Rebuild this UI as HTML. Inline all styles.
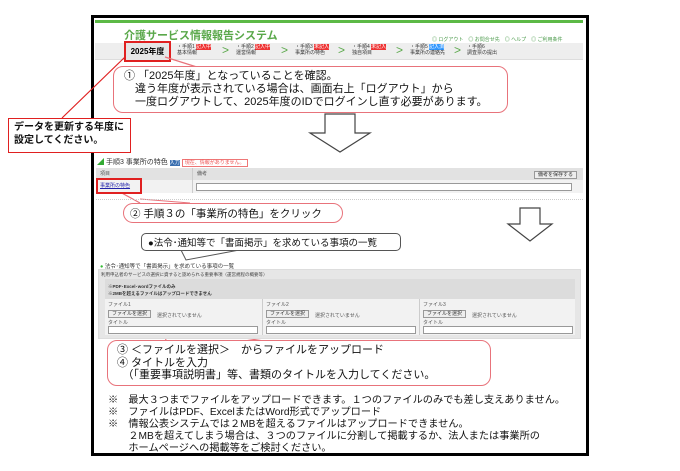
<!DOCTYPE html>
<html><head><meta charset="utf-8"><style>
body{margin:0;width:680px;height:471px;background:#fff;position:relative;overflow:hidden;font-family:"Liberation Sans","Noto Sans CJK JP",sans-serif;}
.a{position:absolute;}
.t{position:absolute;white-space:nowrap;}
.callout{position:absolute;border:1.5px solid #e8737b;border-radius:10px;background:#fff;}
.small{font-size:5px;color:#555;}
.btn{position:absolute;border:1px solid #999;background:#eee;font-size:6px;line-height:8px;padding:0 3px;color:#333;}
.inp{position:absolute;border:1px solid #999;background:#fff;height:6px;}
</style></head><body>
<div class="a" style="left:91px;top:15px;width:492px;height:435px;border:3px solid #000;"></div>
<div class="a" style="left:95px;top:20px;width:488px;height:3px;background:#5cb946;"></div>
<div class="t" style="left:124px;top:27px;font-size:11px;color:#5aa84a;font-weight:bold;">介護サービス情報報告システム</div>
<div class="t small" style="left:432px;top:36px;color:#4a9a4a;">◎ ログアウト　◎ お問合せ先　◎ ヘルプ　◎ ご利用条件</div>
<div class="a" style="left:95px;top:43px;width:488px;height:16px;background:#eeeeee;border-bottom:1px solid #ddd;"></div>
<div class="a" style="left:124px;top:41px;width:43px;height:17px;border:2px solid #e02020;background:#e6e6e6;font-size:8px;font-weight:bold;line-height:17px;text-align:center;">2025年度</div>
<div class="t" style="left:177px;top:44px;font-size:5px;line-height:6px;color:#333;">・手順1 <span style="background:#e33;color:#fff">記入中</span><br>基本情報</div>
<div class="t" style="left:222px;top:43px;font-size:12px;color:#5aa84a;">&gt;</div>
<div class="t" style="left:236px;top:44px;font-size:5px;line-height:6px;color:#333;">・手順2 <span style="background:#e33;color:#fff">記入中</span><br>運営情報</div>
<div class="t" style="left:281px;top:43px;font-size:12px;color:#5aa84a;">&gt;</div>
<div class="t" style="left:295px;top:44px;font-size:5px;line-height:6px;color:#333;">・手順3 <span style="background:#e33;color:#fff">未記入</span><br>事業所の特色</div>
<div class="t" style="left:338px;top:43px;font-size:12px;color:#5aa84a;">&gt;</div>
<div class="t" style="left:352px;top:44px;font-size:5px;line-height:6px;color:#333;">・手順4 <span style="background:#e33;color:#fff">未記入</span><br>独自項目</div>
<div class="t" style="left:396px;top:43px;font-size:12px;color:#5aa84a;">&gt;</div>
<div class="t" style="left:410px;top:44px;font-size:5px;line-height:6px;color:#333;">・手順5 <span style="background:#39f;color:#fff">記入済</span><br>事業所の連絡先</div>
<div class="t" style="left:454px;top:43px;font-size:12px;color:#5aa84a;">&gt;</div>
<div class="t" style="left:467px;top:44px;font-size:5px;line-height:6px;color:#333;">・手順6<br>調査票の提出</div>

<svg class="a" style="left:0;top:0" width="680" height="471">
<line x1="125" y1="57" x2="62" y2="118" stroke="#e02020" stroke-width="1.2"/>
<line x1="165" y1="57" x2="200" y2="68" stroke="#e8737b" stroke-width="1.2"/>
<path d="M325 114 H355 V133 H370 L340 152 L310 133 H325 Z" fill="#fff" stroke="#444" stroke-width="1.2"/>
<path d="M520 208 H540 V224 H552 L530 241 L508 224 H520 Z" fill="#fff" stroke="#444" stroke-width="1.2"/>
<line x1="120" y1="192" x2="140" y2="203" stroke="#e8737b" stroke-width="1.2"/>
<line x1="140" y1="199" x2="190" y2="203" stroke="#e8737b" stroke-width="1"/>
<path d="M180 248 L186 260 L250 248" fill="#fff" stroke="#555" stroke-width="1"/>
<line x1="170" y1="326" x2="165" y2="342" stroke="#e8737b" stroke-width="1.2"/>
<line x1="170" y1="326" x2="270" y2="342" stroke="#e8737b" stroke-width="1.2"/>
</svg>

<div class="callout" style="left:113px;top:66px;width:393px;height:45px;"></div>
<div class="t" style="left:124px;top:70px;font-size:11px;line-height:13px;color:#111;">① 「2025年度」となっていることを確認。<br>　違う年度が表示されている場合は、画面右上「ログアウト」から<br>　一度ログアウトして、2025年度のIDでログインし直す必要があります。</div>

<div class="a" style="left:8px;top:118px;width:121px;height:33px;border:1.5px solid #e02020;background:#fff;"></div>
<div class="t" style="left:14px;top:121px;font-size:10px;line-height:13px;font-weight:bold;color:#111;">データを更新する年度に<br>設定してください。</div>

<div class="t" style="left:97px;top:157px;font-size:7px;color:#333;"><span style="color:#3a3">◢</span> 手順3 事業所の特色 <span style="background:#3a6fb0;color:#fff;font-size:5px">入力</span> <span style="border:1px solid #e77;color:#e55;font-size:5px;padding:0 2px">現在、情報がありません。</span></div>
<div class="a" style="left:96px;top:168px;width:487px;height:12px;background:#e2e2e2;"></div>
<div class="a" style="left:96px;top:180px;width:487px;height:13px;background:#f2f2f2;"></div>
<div class="a" style="left:192px;top:168px;width:1px;height:25px;background:#ccc;"></div>
<div class="t small" style="left:100px;top:170px;">項目</div>
<div class="t small" style="left:197px;top:170px;">備考</div>
<div class="btn" style="left:534px;top:171px;font-size:5px;line-height:6px;">備考を保存する</div>
<div class="inp" style="left:196px;top:183px;width:374px;"></div>
<div class="a" style="left:96px;top:178px;width:42px;height:12px;border:2px solid #e02020;"></div>
<div class="t" style="left:100px;top:182px;font-size:5px;color:#22a;text-decoration:underline;">事業所の特色</div>
<div class="a" style="left:96px;top:199px;width:487px;border-top:1px dotted #ccc;"></div>

<div class="callout" style="left:123px;top:203px;width:218px;height:18px;"></div>
<div class="t" style="left:130px;top:206px;font-size:10.5px;color:#111;">② 手順３の「事業所の特色」をクリック</div>

<div class="a" style="left:141px;top:233px;width:258px;height:16px;border:1.2px solid #555;border-radius:5px;background:#fff;"></div>
<div class="t" style="left:148px;top:235px;font-size:9.5px;color:#111;">●法令･通知等で「書面掲示」を求めている事項の一覧</div>

<div class="t" style="left:100px;top:262px;font-size:5.5px;color:#333;"><span style="color:#3b3">●</span> 法令･通知等で「書面掲示」を求めている事項の一覧</div>
<div class="a" style="left:98px;top:269px;width:481px;height:68px;background:#e6e6e6;border:1px solid #ddd;"></div>
<div class="t" style="left:101px;top:272px;font-size:4.5px;color:#444;">利用申込者のサービスの選択に資すると認められる重要事項（運営規程の概要等）</div>
<div class="a" style="left:105px;top:279px;width:470px;height:20px;background:#dcdcdc;"></div>
<div class="t" style="left:108px;top:283px;font-size:4.5px;line-height:7px;color:#333;font-weight:bold;">※PDF･Excel･wordファイルのみ<br>※2MBを超えるファイルはアップロードできません</div>
<div class="a" style="left:105px;top:299px;width:470px;height:36px;background:#f2f2f2;"></div>
<div class="a" style="left:262px;top:299px;width:1px;height:36px;background:#ccc;"></div>
<div class="a" style="left:419px;top:299px;width:1px;height:36px;background:#ccc;"></div>
<div class="t small" style="left:108px;top:301px;">ファイル1</div>
<div class="t small" style="left:266px;top:301px;">ファイル2</div>
<div class="t small" style="left:423px;top:301px;">ファイル3</div>
<div class="btn" style="left:108px;top:310px;font-size:5px;line-height:6px;">ファイルを選択</div><div class="t small" style="left:157px;top:312px;">選択されていません</div>
<div class="btn" style="left:266px;top:310px;font-size:5px;line-height:6px;">ファイルを選択</div><div class="t small" style="left:315px;top:312px;">選択されていません</div>
<div class="btn" style="left:423px;top:310px;font-size:5px;line-height:6px;">ファイルを選択</div><div class="t small" style="left:472px;top:312px;">選択されていません</div>
<div class="t small" style="left:108px;top:319px;">タイトル</div>
<div class="t small" style="left:266px;top:319px;">タイトル</div>
<div class="t small" style="left:423px;top:319px;">タイトル</div>
<div class="inp" style="left:108px;top:326px;width:148px;"></div>
<div class="inp" style="left:266px;top:326px;width:148px;"></div>
<div class="inp" style="left:423px;top:326px;width:148px;"></div>

<div class="callout" style="left:107px;top:340px;width:382px;height:44px;"></div>
<div class="t" style="left:117px;top:344px;font-size:11px;line-height:12.5px;color:#111;">③ ＜ファイルを選択＞　からファイルをアップロード<br>④ タイトルを入力<br>　（「重要事項説明書」等、書類のタイトルを入力してください。</div>

<div class="t" style="left:108px;top:395px;font-size:10.2px;line-height:12px;color:#111;">※　最大３つまでファイルをアップロードできます。１つのファイルのみでも差し支えありません。<br>※　ファイルはPDF、ExcelまたはWord形式でアップロード<br>※　情報公表システムでは２MBを超えるファイルはアップロードできません。<br>　　２MBを超えてしまう場合は、３つのファイルに分割して掲載するか、法人または事業所の<br>　　ホームページへの掲載等をご検討ください。</div>
</body></html>
